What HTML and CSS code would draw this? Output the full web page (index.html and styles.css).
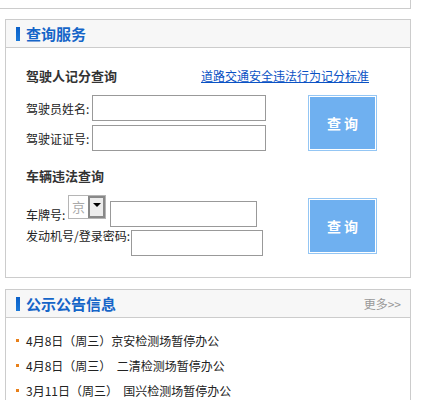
FILE: index.html
```html
<!DOCTYPE html>
<html lang="zh-CN">
<head>
  <meta charset="UTF-8" />
  <title>查询服务</title>
  <link rel="stylesheet" href="styles.css">
</head>
<body>

  <div class="prev-box"></div>

  <div class="panel">
    <div class="panel-head">
      <span class="bar"></span>
      <span class="panel-title">查询服务</span>
    </div>
    <div class="panel-body">
      <div class="sub-head">
        <span class="sub-title">驾驶人记分查询</span>
        <a href="#" class="rule-link">道路交通安全违法行为记分标准</a>
      </div>
      <div class="query-row">
        <div class="fields">
          <div class="field">
            <label class="lbl lbl-driver">驾驶员姓名:</label>
            <input type="text" class="txt txt-driver" />
          </div>
          <div class="field">
            <label class="lbl lbl-driver">驾驶证证号:</label>
            <input type="text" class="txt txt-driver" />
          </div>
        </div>
        <button type="button" class="btn-query">查 询</button>
      </div>

      <div class="sub-head sub-head-car">
        <span class="sub-title">车辆违法查询</span>
      </div>
      <div class="query-row query-row-car">
        <div class="fields">
          <div class="field field-plate">
            <label class="lbl lbl-plate">车牌号:</label>
            <div class="province">
              <span class="province-val">京</span>
              <span class="province-btn"><i class="arrow"></i></span>
            </div>
            <input type="text" class="txt txt-plate" />
          </div>
          <div class="field field-engine">
            <label class="lbl lbl-engine">发动机号/登录密码:</label>
            <input type="text" class="txt txt-engine" />
          </div>
        </div>
        <button type="button" class="btn-query btn-query-car">查 询</button>
      </div>
    </div>
  </div>

  <div class="panel panel-notice">
    <div class="panel-head">
      <span class="bar"></span>
      <span class="panel-title">公示公告信息</span>
      <a href="#" class="more">更多&gt;&gt;</a>
    </div>
    <ul class="notice-list">
      <li>4月8日（周三）京安检测场暂停办公</li>
      <li>4月8日（周三）&nbsp; 二清检测场暂停办公</li>
      <li>3月11日（周三）&nbsp; 国兴检测场暂停办公</li>
    </ul>
  </div>

</body>
</html>
```

FILE: styles.css
```css
body {
  margin: 0;
  font-family: "Noto Sans CJK SC", "Liberation Sans", sans-serif;
  font-size: 12px;
  color: #333;
  background: #fff;
}
.prev-box {
  width: 410px;
  height: 8px;
  border-right: 1px solid #ccc;
  border-bottom: 1px solid #ccc;
}
.panel {
  margin: 10px 0 0 5px;
  width: 404px;
  border: 1px solid #ccc;
}
.panel-notice {
  margin-top: 11px;
}
.panel-head {
  height: 27px;
  background: #f7f7f7;
  border-bottom: 1px solid #ccc;
  display: flex;
  align-items: center;
  padding: 0 9px 0 10px;
}
.bar {
  width: 4px;
  height: 14px;
  background: linear-gradient(#0a5fc8, #1b78d8);
  margin-right: 6px;
}
.panel-title {
  font-size: 15px;
  font-weight: bold;
  color: #1565c8;
  line-height: 27px;
}
.more {
  margin-left: auto;
  color: #999;
  text-decoration: none;
  font-size: 12px;
}
.panel-body {
  padding: 19px 33px 21px 20px;
}
.sub-head {
  display: flex;
  justify-content: space-between;
  align-items: center;
  height: 16px;
}
.sub-title {
  font-size: 13px;
  font-weight: bold;
  color: #333;
}
.rule-link {
  color: #0a52c4;
  text-decoration: underline;
  font-size: 12px;
  margin-right: 8px;
}
.query-row {
  display: flex;
  justify-content: space-between;
  align-items: flex-start;
  margin-top: 12px;
}
.fields {
  display: flex;
  flex-direction: column;
  gap: 4px;
}
.field {
  display: flex;
  align-items: center;
}
.lbl {
  white-space: nowrap;
  color: #222;
}
.lbl-driver {
  width: 66px;
}
.txt {
  box-sizing: border-box;
  height: 26px;
  border: 1px solid #999;
  margin: 0;
  padding: 0 3px;
  font-size: 12px;
}
.txt-driver {
  width: 174px;
}
.btn-query {
  width: 69px;
  height: 56px;
  background: #6fb0f0;
  border: 1px solid #94c6f4;
  box-shadow: inset 0 0 0 1px #fff;
  color: #fff;
  font-family: "Noto Sans CJK SC", sans-serif;
  font-size: 14px;
  font-weight: bold;
  padding: 0;
  margin-top: 0;
  cursor: pointer;
}
.sub-head-car {
  margin-top: 16px;
}
.query-row-car {
  margin-top: 12px;
}
.btn-query-car {
  margin-top: 3px;
}
.fields .field-plate {
  align-items: flex-start;
  height: 32px;
}
.lbl-plate {
  width: 42px;
  margin-top: 11px;
}
.province {
  box-sizing: border-box;
  width: 38px;
  height: 24px;
  border: 1px solid #b5b5b5;
  display: flex;
}
.province-val {
  flex: 1;
  color: #aaa;
  font-size: 13px;
  line-height: 22px;
  text-align: center;
}
.province-btn {
  box-sizing: border-box;
  width: 17px;
  height: 22px;
  border: 2px solid #888;
  background: #ececec;
  display: flex;
  justify-content: center;
  padding-top: 5px;
}
.arrow {
  width: 0;
  height: 0;
  border-left: 4px solid transparent;
  border-right: 4px solid transparent;
  border-top: 4px solid #000;
}
.txt-plate {
  width: 147px;
  margin: 6px 0 0 4px;
}
.fields .field-engine {
  align-items: flex-start;
  margin-top: -1px;
}
.lbl-engine {
  width: 105px;
  margin-top: -1px;
  line-height: 14px;
}
.txt-engine {
  width: 132px;
  margin-top: 0;
}
.notice-list {
  list-style: none;
  margin: 0;
  padding: 10px 0 0 10px;
}
.notice-list li {
  line-height: 25px;
  padding-left: 10px;
  position: relative;
  color: #222;
  white-space: nowrap;
}
.notice-list li::before {
  content: "";
  position: absolute;
  left: 0;
  top: 11px;
  width: 3px;
  height: 3px;
  background: #e8801a;
}
```
